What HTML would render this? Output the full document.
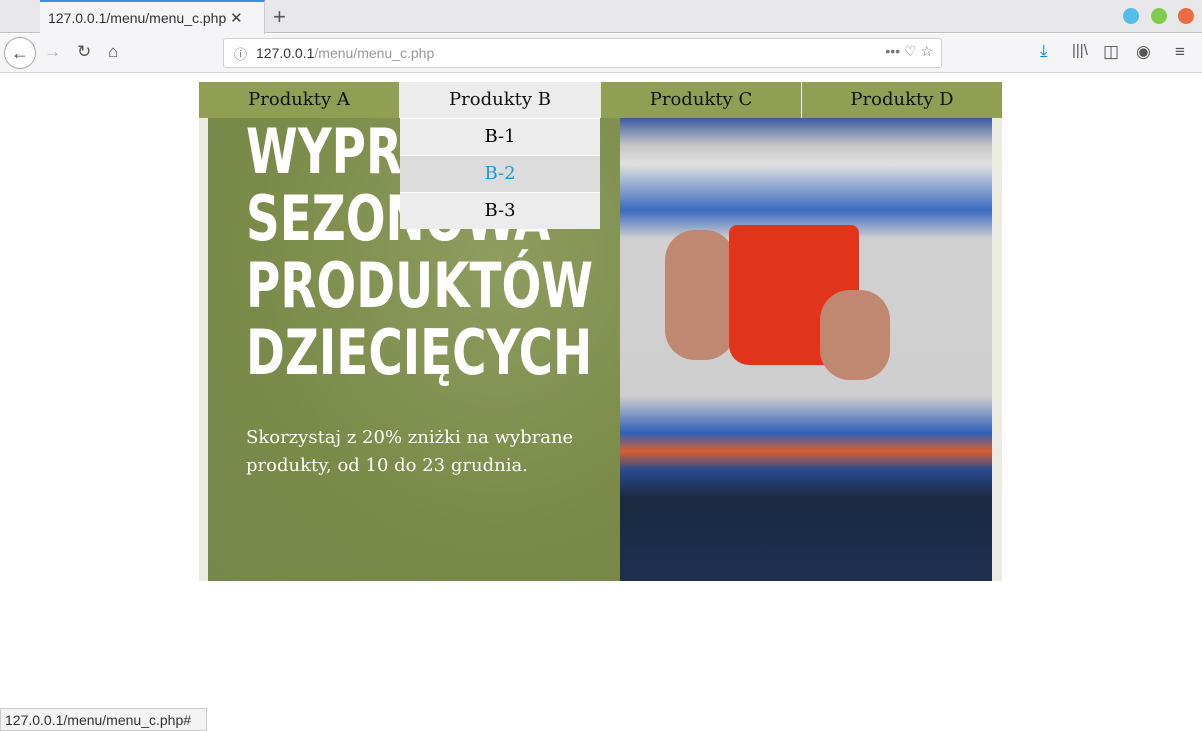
<!DOCTYPE html>
<html><head><meta charset="utf-8"><style>
*{margin:0;padding:0;box-sizing:border-box}
body{width:1202px;height:731px;overflow:hidden;background:#fff;font-family:"Liberation Sans",sans-serif;position:relative}
.tabbar{position:absolute;left:0;top:0;width:1202px;height:33px;background:#e8e8eb;border-bottom:1px solid #bdbdc2}
.tab{position:absolute;left:40px;top:0;width:225px;height:34px;background:#f5f5f7;border-top:2px solid #3a8ee6;border-right:1px solid #c8c8cc;font-size:14px;color:#333;padding:7px 0 0 8px}
.nav{position:absolute;left:0;top:34px;width:1202px;height:39px;background:#f5f5f7;border-bottom:1px solid #d5d5d9}
.url{position:absolute;left:223px;top:38px;width:719px;height:30px;background:#fff;border:1px solid #cfcfd6;border-radius:3px;font-size:14px;color:#333;padding:6px 0 0 32px}
.dot{position:absolute;top:8px;width:16px;height:16px;border-radius:50%}
.ico{position:absolute;color:#555;font-size:17px}
.frame{position:absolute;left:199px;top:82px;width:803px;height:499px;background:#ebebe2}
.left{position:absolute;left:208px;top:118px;width:412px;height:463px;background:radial-gradient(ellipse at 70% 30%,#8e9d5f,#7a8a48 60%,#75874a)}
.right{position:absolute;left:620px;top:118px;width:372px;height:463px;background:linear-gradient(#3a5aa0 0,#c8c8c8 6%,#e0e0e0 10%,#3a6ac0 20%,#d0d0d0 26%,#cfcfcf 60%,#3060b8 68%,#d56030 72%,#2a4a90 76%,#1a2a40 82%,#1c3050 100%)}
.mug{position:absolute;left:729px;top:225px;width:130px;height:140px;background:#e0351a;border-radius:8px 8px 20px 20px}
.hand{position:absolute;background:#c08870;border-radius:30px}
h1{position:absolute;left:246px;top:118px;color:#fff;font-family:"DejaVu Sans Condensed","Liberation Sans Narrow",sans-serif;font-weight:bold;font-size:62px;line-height:67px;letter-spacing:0;transform:scaleX(0.84);transform-origin:0 0;white-space:nowrap}
.sub{position:absolute;left:246px;top:424px;color:#fff;font-family:"DejaVu Serif","Liberation Serif",serif;font-size:18px;line-height:28px;width:360px}
.menu{position:absolute;top:82px;height:36px;width:200px;background:#919f54;font-family:"DejaVu Serif","Liberation Serif",serif;font-size:18px;text-align:center;line-height:35px;color:#111}
.dd{position:absolute;left:400px;width:200px;height:37px;background:#ececec;font-family:"DejaVu Serif","Liberation Serif",serif;font-size:18px;text-align:center;line-height:36px;border-top:1px solid #fff}
.status{position:absolute;left:0;top:708px;height:23px;width:207px;background:#f3f3f3;border:1px solid #ccc;font-size:14px;color:#333;padding:3px 4px}
</style></head><body>
<div class="tabbar"></div>
<div class="tab">127.0.0.1/menu/menu_c.php <span style="font-size:15px;color:#444">✕</span></div>
<div class="ico" style="left:273px;top:4px;font-size:22px">+</div>
<div class="dot" style="left:1123px;background:#54bde8"></div>
<div class="dot" style="left:1151px;background:#7fcc4e"></div>
<div class="dot" style="left:1178px;background:#ec6b40"></div>
<div class="nav"></div>
<div style="position:absolute;left:4px;top:37px;width:32px;height:32px;border:1px solid #aaa;border-radius:50%;background:#fff;text-align:center;font-size:18px;line-height:30px;color:#444">←</div>
<div class="ico" style="left:44px;top:42px;color:#aaa">→</div>
<div class="ico" style="left:77px;top:42px">↻</div>
<div class="ico" style="left:108px;top:42px">⌂</div>
<div class="url"><span style="position:absolute;left:10px;top:5px;color:#777;font-size:13px">ⓘ</span>127.0.0.1<span style="color:#999">/menu/menu_c.php</span><span style="position:absolute;right:8px;top:4px;color:#777">••• ♡ ☆</span></div>
<div class="ico" style="left:1040px;top:41px;color:#0a84ff">⤓</div>
<div class="ico" style="left:1072px;top:42px;font-size:15px">|||\</div>
<div class="ico" style="left:1103px;top:42px">◫</div>
<div class="ico" style="left:1136px;top:42px">◉</div>
<div class="ico" style="left:1175px;top:42px">≡</div>
<div class="frame"></div>
<div class="left"></div>
<div class="right"></div>
<div class="hand" style="left:665px;top:230px;width:70px;height:130px"></div>
<div class="mug"></div>
<div class="hand" style="left:820px;top:290px;width:70px;height:90px"></div>
<h1>WYPRZ<br>SEZONOWA<br>PRODUKTÓW<br>DZIECIĘCYCH</h1>
<div class="sub">Skorzystaj z 20% zniżki na wybrane produkty, od 10 do 23 grudnia.</div>
<div class="menu" style="left:199px">Produkty A</div>
<div class="menu" style="left:400px;background:#ececec;width:200px">Produkty B</div>
<div class="menu" style="left:601px">Produkty C</div>
<div class="menu" style="left:802px">Produkty D</div>
<div class="dd" style="top:118px">B-1</div>
<div class="dd" style="top:155px;background:#dcdcdc;color:#1a9ad6">B-2</div>
<div class="dd" style="top:192px">B-3</div>
<div class="status">127.0.0.1/menu/menu_c.php#</div>
</body></html>
